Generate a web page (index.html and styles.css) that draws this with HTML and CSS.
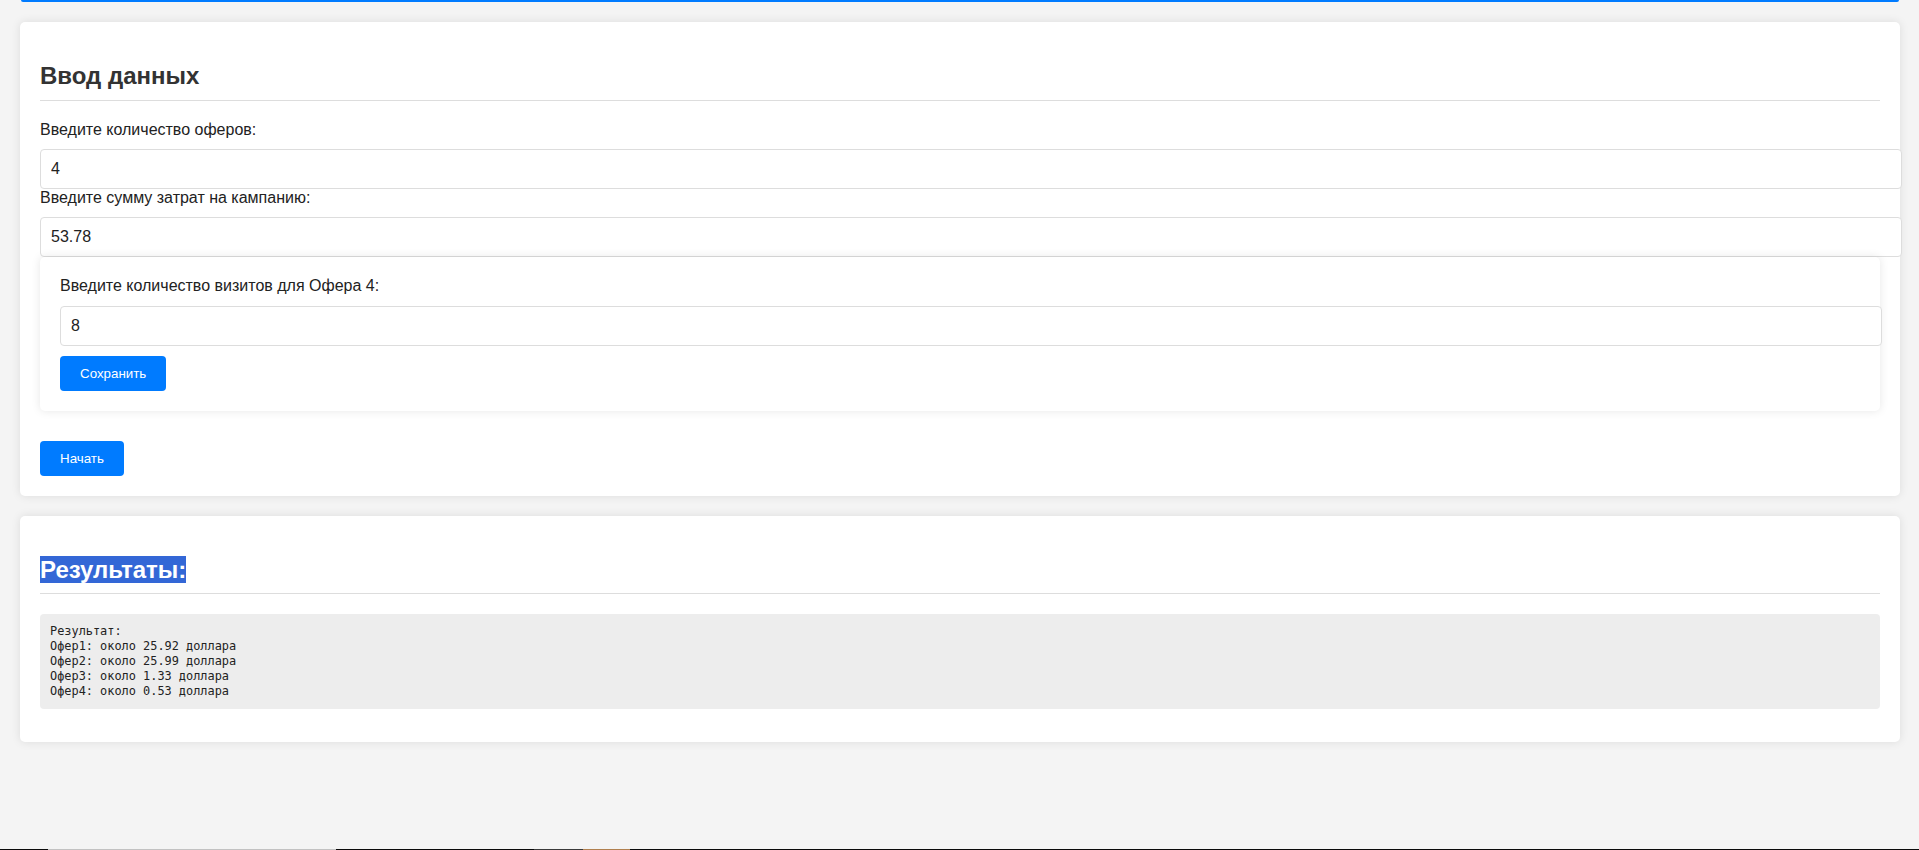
FILE: index.html
```html
<!DOCTYPE html>
<html lang="ru">
<head>
<meta charset="utf-8">
<title>Ввод данных</title>
<link rel="stylesheet" href="styles.css">
</head>
<body>
<div class="topbar"></div>
<section class="card">
  <h2 class="card-title">Ввод данных</h2>
  <label class="field-label" for="offers">Введите количество оферов:</label>
  <input class="field-input" id="offers" type="text" value="4">
  <label class="field-label" for="cost">Введите сумму затрат на кампанию:</label>
  <input class="field-input" id="cost" type="text" value="53.78">
  <div class="offer-box">
    <label class="field-label" for="visits">Введите количество визитов для Офера 4:</label>
    <input class="field-input" id="visits" type="text" value="8">
    <button class="btn btn-save" type="button">Сохранить</button>
  </div>
  <button class="btn btn-start" type="button">Начать</button>
</section>
<section class="card">
  <h2 class="card-title"><span class="selected">Результаты:</span></h2>
  <pre class="result">Результат:
Офер1: около 25.92 доллара
Офер2: около 25.99 доллара
Офер3: около 1.33 доллара
Офер4: около 0.53 доллара</pre>
</section>
<div class="taskbar">
  <span class="tb-seg tb-black1"></span>
  <span class="tb-seg tb-gray"></span>
  <span class="tb-seg tb-black2"></span>
  <span class="tb-seg tb-dark"></span>
  <span class="tb-seg tb-orange"></span>
</div>
</body>
</html>
```
FILE: styles.css
```css
html, body {
  margin: 0;
  padding: 0;
}
body {
  background: #f4f4f4;
  font-family: "Liberation Sans", Arial, sans-serif;
  color: #333;
  padding: 0 19px 0 20px;
  height: 850px;
  box-sizing: border-box;
  overflow: hidden;
}
.topbar {
  height: 2px;
  margin: 0 1px;
  background: #007bff;
  border-radius: 0 0 3px 3px;
}
.card {
  background: #fff;
  border-radius: 5px;
  box-shadow: 0 0 10px rgba(0, 0, 0, 0.1);
  padding: 20px;
  margin-top: 20px;
}
.card-title {
  font-size: 24px;
  font-weight: bold;
  color: #333;
  margin: 20px 0 20px;
  padding-bottom: 10px;
  border-bottom: 1px solid #ddd;
  line-height: 27.6px;
}
.selected {
  background: #3367d6;
  color: #fff;
}
.field-label {
  display: block;
  font-size: 16px;
  line-height: 18.4px;
  margin-bottom: 10px;
  color: #222;
}
.field-input {
  display: block;
  width: 100%;
  padding: 10px;
  border: 1px solid #ddd;
  border-radius: 4px;
  font-family: "Liberation Sans", Arial, sans-serif;
  font-size: 16px;
  line-height: 18px;
  color: #222;
  margin: 0;
  background: #fff;
  outline: none;
}
.offer-box {
  background: #fff;
  border-radius: 5px;
  box-shadow: 0 0 10px rgba(0, 0, 0, 0.1);
  padding: 20px;
  margin-bottom: 0;
}
.btn {
  display: block;
  background: #007bff;
  color: #fff;
  border: none;
  border-radius: 4px;
  font-family: "Liberation Sans", Arial, sans-serif;
  font-size: 13.33px;
  line-height: 15px;
  padding: 10px 20px;
  cursor: pointer;
}
.btn-save {
  margin-top: 10px;
}
.btn-start {
  margin-top: 30px;
}
.result {
  background: #ededed;
  border-radius: 4px;
  padding: 10px;
  margin: 13px 0;
  font-family: "DejaVu Sans Mono", "Liberation Mono", monospace;
  font-size: 11.9px;
  line-height: 15px;
  color: #222;
}
.taskbar {
  position: fixed;
  left: 0;
  right: 0;
  bottom: 0;
  height: 1px;
  background: #0a0a0a;
  display: flex;
}
.tb-seg {
  height: 1px;
  display: block;
}
.tb-black1 { width: 48px; background: #0a0a0a; }
.tb-gray { width: 288px; background: #c2c2c2; }
.tb-black2 { width: 198px; background: #0a0a0a; }
.tb-dark { width: 49px; background: #3a3a3a; }
.tb-orange { width: 47px; background: #b0804f; }
```
